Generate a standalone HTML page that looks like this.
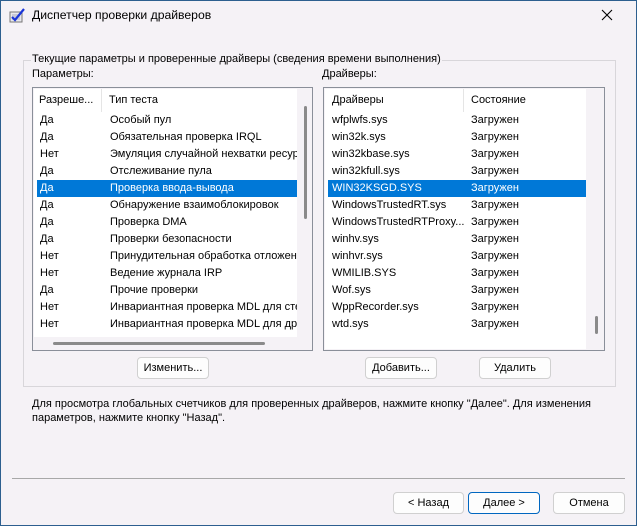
<!DOCTYPE html>
<html><head><meta charset="utf-8"><style>
*{margin:0;padding:0;box-sizing:border-box}
body{width:637px;height:526px;overflow:hidden;background:#f5f2f6;font-family:"Liberation Sans",sans-serif;font-size:11px;color:#000;position:relative}
.a{position:absolute;white-space:nowrap}
.win{position:absolute;left:0;top:0;width:637px;height:526px;border:1px solid #2d5f8f}
.btn{position:absolute;height:22px;border:1px solid #d0d0d0;border-radius:4px;background:#fdfdfd;text-align:center;line-height:20px}
.list{position:absolute;border:1px solid #8a8f99;background:#f5f2f6}
.row{position:absolute;height:17px;line-height:17px}
.sel{background:#0078d7;color:#fff}
</style></head><body>
<div class="win"></div>
<svg class="a" style="left:9px;top:8px" width="18" height="16" viewBox="0 0 18 16"><rect x="1" y="4" width="12" height="10" fill="#e8e8ee" stroke="#777"/><rect x="3" y="6" width="8" height="6" fill="#c9c9d6"/><path d="M3 9l3 3 9-11" stroke="#1a35d8" stroke-width="2.2" fill="none"/></svg>
<div class="a" style="left:32px;top:8px;font-size:12.2px">Диспетчер проверки драйверов</div>
<svg class="a" style="left:601px;top:9px" width="12" height="12"><path d="M1 1l10 10M11 1L1 11" stroke="#000" stroke-width="1.1"/></svg>

<div class="a" style="left:23px;top:60px;width:593px;height:327px;border:1px solid #d8d6da"></div>
<div class="a" style="left:31px;top:53px;background:#f5f2f6;padding:0 1px">Текущие параметры и проверенные драйверы (сведения времени выполнения)</div>
<div class="a" style="left:32px;top:68px">Параметры:</div>
<div class="a" style="left:322px;top:68px">Драйверы:</div>

<div class="list" style="left:32px;top:87px;width:281px;height:264px">
 <div class="a" style="left:1px;top:1px;width:263px;height:248px;background:#fff"></div>
 <div class="a" style="left:68px;top:1px;width:1px;height:23px;background:#e5e5e5"></div>
 <div class="a" style="left:6px;top:6px">Разреше...</div>
 <div class="a" style="left:76px;top:6px">Тип теста</div>
 <div class="a" style="left:271px;top:18px;width:3px;height:113px;background:#8a8a8a;border-radius:2px"></div>
 <div class="a" style="left:20px;top:254px;width:212px;height:3px;background:#8a8a8a;border-radius:2px"></div>
 <div class="a" style="left:1px;top:24px;width:263px;height:225px;overflow:hidden">
  <div class="row" style="top:0;left:0;width:263px"><span class="a" style="left:6px">Да</span><span class="a" style="left:76px">Особый пул</span></div>
  <div class="row" style="top:17px;left:0;width:263px"><span class="a" style="left:6px">Да</span><span class="a" style="left:76px">Обязательная проверка IRQL</span></div>
  <div class="row" style="top:34px;left:0;width:263px"><span class="a" style="left:6px">Нет</span><span class="a" style="left:76px">Эмуляция случайной нехватки ресурсов</span></div>
  <div class="row" style="top:51px;left:0;width:263px"><span class="a" style="left:6px">Да</span><span class="a" style="left:76px">Отслеживание пула</span></div>
  <div class="row sel" style="top:68px;left:3px;width:260px"><span class="a" style="left:3px">Да</span><span class="a" style="left:73px">Проверка ввода-вывода</span></div>
  <div class="row" style="top:85px;left:0;width:263px"><span class="a" style="left:6px">Да</span><span class="a" style="left:76px">Обнаружение взаимоблокировок</span></div>
  <div class="row" style="top:102px;left:0;width:263px"><span class="a" style="left:6px">Да</span><span class="a" style="left:76px">Проверка DMA</span></div>
  <div class="row" style="top:119px;left:0;width:263px"><span class="a" style="left:6px">Да</span><span class="a" style="left:76px">Проверки безопасности</span></div>
  <div class="row" style="top:136px;left:0;width:263px"><span class="a" style="left:6px">Нет</span><span class="a" style="left:76px">Принудительная обработка отложенных</span></div>
  <div class="row" style="top:153px;left:0;width:263px"><span class="a" style="left:6px">Нет</span><span class="a" style="left:76px">Ведение журнала IRP</span></div>
  <div class="row" style="top:170px;left:0;width:263px"><span class="a" style="left:6px">Да</span><span class="a" style="left:76px">Прочие проверки</span></div>
  <div class="row" style="top:187px;left:0;width:263px"><span class="a" style="left:6px">Нет</span><span class="a" style="left:76px">Инвариантная проверка MDL для стека</span></div>
  <div class="row" style="top:204px;left:0;width:263px"><span class="a" style="left:6px">Нет</span><span class="a" style="left:76px">Инвариантная проверка MDL для драйвера</span></div>
 </div>
</div>

<div class="list" style="left:323px;top:87px;width:282px;height:264px">
 <div class="a" style="left:1px;top:1px;width:261px;height:260px;background:#fff"></div>
 <div class="a" style="left:139px;top:1px;width:1px;height:23px;background:#e5e5e5"></div>
 <div class="a" style="left:8px;top:6px">Драйверы</div>
 <div class="a" style="left:147px;top:6px">Состояние</div>
 <div class="a" style="left:271px;top:228px;width:3px;height:18px;background:#8a8a8a;border-radius:2px"></div>
 <div class="a" style="left:1px;top:24px;width:261px;height:236px;overflow:hidden">
  <div class="row" style="top:0"><span class="a" style="left:7px">wfplwfs.sys</span><span class="a" style="left:146px">Загружен</span></div>
  <div class="row" style="top:17px"><span class="a" style="left:7px">win32k.sys</span><span class="a" style="left:146px">Загружен</span></div>
  <div class="row" style="top:34px"><span class="a" style="left:7px">win32kbase.sys</span><span class="a" style="left:146px">Загружен</span></div>
  <div class="row" style="top:51px"><span class="a" style="left:7px">win32kfull.sys</span><span class="a" style="left:146px">Загружен</span></div>
  <div class="row sel" style="top:68px;left:3px;width:258px"><span class="a" style="left:4px">WIN32KSGD.SYS</span><span class="a" style="left:143px">Загружен</span></div>
  <div class="row" style="top:85px"><span class="a" style="left:7px">WindowsTrustedRT.sys</span><span class="a" style="left:146px">Загружен</span></div>
  <div class="row" style="top:102px"><span class="a" style="left:7px">WindowsTrustedRTProxy...</span><span class="a" style="left:146px">Загружен</span></div>
  <div class="row" style="top:119px"><span class="a" style="left:7px">winhv.sys</span><span class="a" style="left:146px">Загружен</span></div>
  <div class="row" style="top:136px"><span class="a" style="left:7px">winhvr.sys</span><span class="a" style="left:146px">Загружен</span></div>
  <div class="row" style="top:153px"><span class="a" style="left:7px">WMILIB.SYS</span><span class="a" style="left:146px">Загружен</span></div>
  <div class="row" style="top:170px"><span class="a" style="left:7px">Wof.sys</span><span class="a" style="left:146px">Загружен</span></div>
  <div class="row" style="top:187px"><span class="a" style="left:7px">WppRecorder.sys</span><span class="a" style="left:146px">Загружен</span></div>
  <div class="row" style="top:204px"><span class="a" style="left:7px">wtd.sys</span><span class="a" style="left:146px">Загружен</span></div>
 </div>
</div>

<div class="btn" style="left:137px;top:357px;width:72px">Изменить...</div>
<div class="btn" style="left:365px;top:357px;width:72px">Добавить...</div>
<div class="btn" style="left:479px;top:357px;width:72px">Удалить</div>

<div class="a" style="left:32px;top:397px;line-height:14px">Для просмотра глобальных счетчиков для проверенных драйверов, нажмите кнопку "Далее". Для изменения<br>параметров, нажмите кнопку "Назад".</div>

<div class="a" style="left:12px;top:478px;width:613px;height:1px;background:#a8a8a8"></div>
<div class="btn" style="left:393px;top:492px;width:71px">&lt; Назад</div>
<div class="btn" style="left:468px;top:492px;width:72px;border:1px solid #0067c0;">Далее &gt;</div>
<div class="btn" style="left:553px;top:492px;width:72px">Отмена</div>
</body></html>
